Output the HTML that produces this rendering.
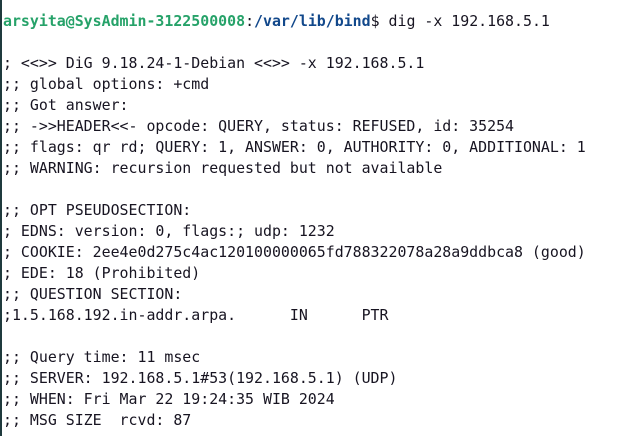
<!DOCTYPE html>
<html><head><style>
html,body{margin:0;padding:0;background:#fff;width:637px;height:436px;overflow:hidden}
.l{position:absolute;left:0;top:0;width:2px;height:436px;background:#1f3a3d}
pre{margin:0;position:absolute;left:3px;top:11px;font-family:"DejaVu Sans Mono","Liberation Mono",monospace;font-size:14.9px;line-height:21px;color:#171421}
.g{color:#26a269;font-weight:bold}.b{color:#12488b;font-weight:bold}
</style></head><body><div class="l"></div>
<pre><span class="g">arsyita@SysAdmin-3122500008</span>:<span class="b">/var/lib/bind</span>$ dig -x 192.168.5.1

; &lt;&lt;&gt;&gt; DiG 9.18.24-1-Debian &lt;&lt;&gt;&gt; -x 192.168.5.1
;; global options: +cmd
;; Got answer:
;; -&gt;&gt;HEADER&lt;&lt;- opcode: QUERY, status: REFUSED, id: 35254
;; flags: qr rd; QUERY: 1, ANSWER: 0, AUTHORITY: 0, ADDITIONAL: 1
;; WARNING: recursion requested but not available

;; OPT PSEUDOSECTION:
; EDNS: version: 0, flags:; udp: 1232
; COOKIE: 2ee4e0d275c4ac120100000065fd788322078a28a9ddbca8 (good)
; EDE: 18 (Prohibited)
;; QUESTION SECTION:
;1.5.168.192.in-addr.arpa.      IN      PTR

;; Query time: 11 msec
;; SERVER: 192.168.5.1#53(192.168.5.1) (UDP)
;; WHEN: Fri Mar 22 19:24:35 WIB 2024
;; MSG SIZE  rcvd: 87</pre>
</body></html>
